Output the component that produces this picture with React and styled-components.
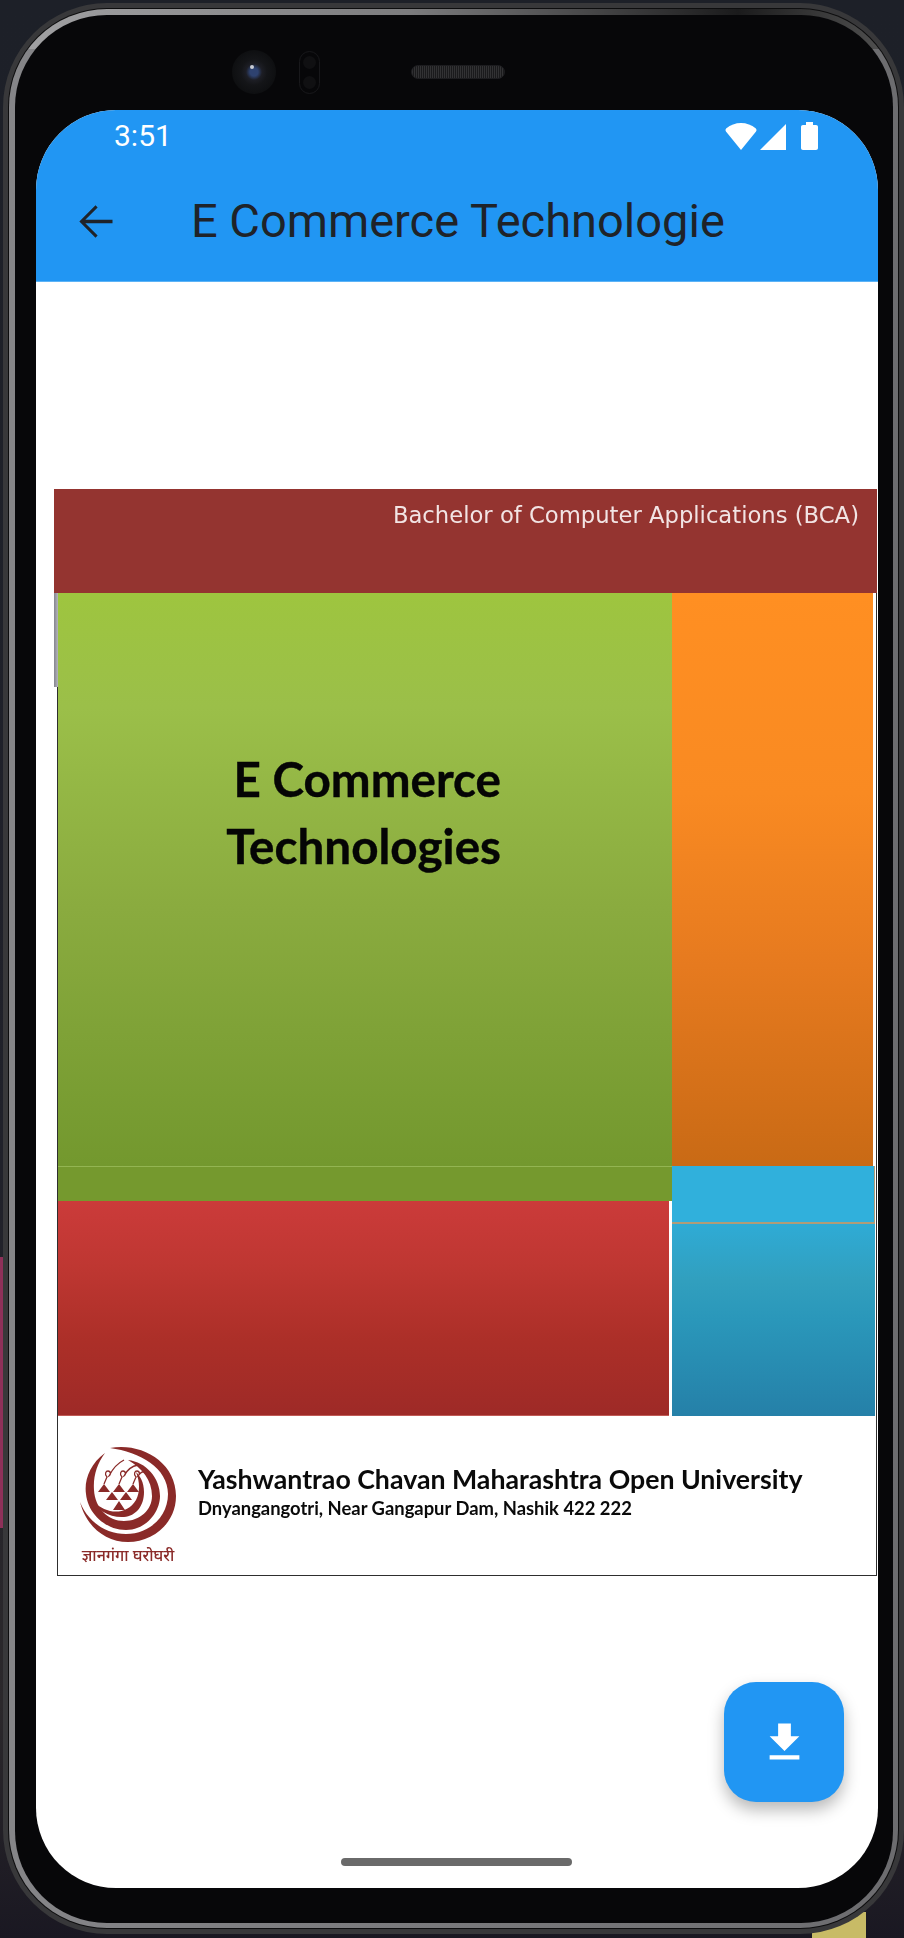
import React from "react";
import styled, { createGlobalStyle } from "styled-components";

const Global = createGlobalStyle`
  html, body { margin: 0; padding: 0; background: #1b1d24; }
  * { box-sizing: border-box; }
`;

const Page = styled.div`
  position: relative;
  width: 904px;
  height: 1938px;
  padding: 3px 0 4px 3px;
  overflow: hidden;
  background: linear-gradient(180deg, #1d2028 0%, #20212a 60%, #2b282b 88%, #1a1822 100%);
`;

const SideGlow = styled.div`
  position: absolute;
  left: 0;
  top: 1257px;
  width: 3px;
  height: 271px;
  background: #8e3059;
`;

const CornerGlow = styled.div`
  position: absolute;
  left: 812px;
  top: 1912px;
  width: 54px;
  height: 26px;
  background: #c8bb66;
`;

const OuterRing = styled.div`
  position: relative;
  height: 100%;
  padding: 5px;
  border-radius: 104px;
  background: #38383a;
`;

const InnerLine = styled.div`
  height: 100%;
  padding: 1px;
  border-radius: 99px;
  background: #0d0d0e;
`;

const LightRing = styled.div`
  height: 100%;
  padding: 6px 5px 5px 6px;
  border-radius: 98px;
  background:
    linear-gradient(90deg, #a2a2a4 0%, #7c7c7e 45%, #1b1b1c 82%, #555 100%) top / 100% 40px no-repeat,
    linear-gradient(90deg, #858588 0%, #6c6c6f 100%);
`;

const Bezel = styled.div`
  display: flex;
  flex-direction: column;
  height: 100%;
  padding: 0 15px 35px 21px;
  border-radius: 92px;
  background: #070709;
`;

const SensorRow = styled.div`
  flex: none;
  display: flex;
  align-items: center;
  height: 95px;
  padding: 19px 0 0 196px;
`;

const Camera = styled.div`
  position: relative;
  width: 44px;
  height: 44px;
  border-radius: 50%;
  background: radial-gradient(circle at 50% 50%, #2e4270 0 4px, #1d1e25 8px, #141518 13px, #0e0f11 22px);
`;

const Glint = styled.span`
  position: absolute;
  left: 18px;
  top: 15px;
  width: 4px;
  height: 4px;
  border-radius: 50%;
  background: #c8ccd4;
`;

const SensorPill = styled.div`
  display: flex;
  flex-direction: column;
  align-items: center;
  justify-content: space-between;
  width: 21px;
  height: 43px;
  margin-left: 23px;
  padding: 4px 0;
  border: 1px solid #18181b;
  border-radius: 11px;
`;

const SensorDot = styled.span`
  width: 13px;
  height: 13px;
  border-radius: 50%;
  background: #101012;
`;

const Speaker = styled.div`
  width: 94px;
  height: 14px;
  margin-left: 91px;
  border: 1px solid #1c1c1f;
  border-radius: 7px;
  background:
    repeating-linear-gradient(90deg, #323234 0 1px, #1a1a1c 1px 2px),
    #2a2a2c;
`;

const Screen = styled.div`
  position: relative;
  flex: 1;
  display: flex;
  flex-direction: column;
  min-height: 0;
  overflow: hidden;
  border-radius: 80px;
  background: #fff;
`;

const AppBar = styled.header`
  flex: none;
  height: 172px;
  background: #2196f3;
  border-bottom: 1px solid #5cb3f6;
`;

const StatusRow = styled.div`
  display: flex;
  align-items: center;
  justify-content: space-between;
  height: 52px;
  padding: 0 60px 0 78px;
`;

const Clock = styled.span`
  font: 400 30px/1 Roboto, sans-serif;
  color: #fff;
`;

const StatusIcons = styled.div`
  display: flex;
  align-items: center;
`;

const Wifi = styled.svg`
  width: 32px;
  height: 27px;
  fill: #fff;
`;

const Signal = styled.svg`
  width: 26px;
  height: 27px;
  margin-left: 3px;
  fill: #fff;
`;

const Battery = styled.svg`
  width: 17px;
  height: 28px;
  margin-left: 15px;
  fill: #fff;
`;

const Toolbar = styled.div`
  display: flex;
  align-items: center;
  height: 118px;
  padding-left: 34px;
`;

const BackIcon = styled.svg`
  flex: none;
  width: 51px;
  height: 51px;
  fill: #1f2329;
`;

const Title = styled.h1`
  margin: 0 0 0 70px;
  font: 400 47px/1.2 Roboto, sans-serif;
  color: #1f2329;
  white-space: nowrap;
`;

const Body = styled.main`
  flex: 1;
  display: flex;
  flex-direction: column;
  min-height: 0;
  padding: 207px 2px 22px 18px;
`;

const Cover = styled.section`
  position: relative;
  flex: none;
  width: 823px;
  filter: blur(0.35px);

  &::before {
    content: "";
    position: absolute;
    left: 0;
    top: 0;
    width: 3.5px;
    height: 198px;
    background: linear-gradient(90deg, #85858e, #b4b4bc);
  }
`;

const Banner = styled.div`
  height: 104px;
  padding: 14px 18px 0 0;
  background: #943430;
  text-align: right;
  font: 400 22.7px/24px "DejaVu Sans", sans-serif;
  color: #f2e4e4;
  filter: blur(0.6px);
  white-space: nowrap;
`;

const CoverSheet = styled.div`
  margin-left: 3px;
  border-left: 1.5px solid #2e2e2e;
  border-right: 1.5px solid #2e2e2e;
  border-bottom: 1.5px solid #2e2e2e;
  background: #fff;
`;

const Tiles = styled.div`
  display: grid;
  grid-template-columns: 614px 203px;
`;

const LeftTiles = styled.div`
  display: flex;
  flex-direction: column;
`;

const RightTiles = styled.div`
  display: flex;
  flex-direction: column;
`;

const GreenTile = styled.div`
  height: 573px;
  padding: 152px 0 0 165px;
  background: linear-gradient(180deg, #9ec53f 0%, #9bbf49 20%, #8aab3f 55%, #73982e 100%);
`;

const CoverTitle = styled.h2`
  width: 278px;
  margin: 0;
  text-align: right;
  font: 700 47.6px/67px Lato, sans-serif;
  color: #050505;
  -webkit-text-stroke: 0.4px #050505;
  white-space: nowrap;
`;

const GreenStrip = styled.div`
  height: 35px;
  border-top: 1px solid #93b552;
  background: #75992e;
`;

const RedTile = styled.div`
  flex: 1;
  height: 215px;
  margin-right: 3px;
  background: linear-gradient(180deg, #cb3b3a 0%, #bf3732 30%, #ac2f28 65%, #9e2a27 100%);
  border-bottom: 1px solid #c05a55;
`;

const OrangeTile = styled.div`
  height: 573px;
  margin-right: 2px;
  background: linear-gradient(180deg, #ff8f22 0%, #f98a22 35%, #e67a1f 65%, #c96a15 100%);
`;

const BlueHead = styled.div`
  height: 58px;
  border-right: 1.5px solid #b09c78;
  border-bottom: 2px solid #b09c78;
  background: #30b0dc;
`;

const BlueTile = styled.div`
  height: 192px;
  background: linear-gradient(180deg, #2fabd5 0%, #319fbe 30%, #2a97ba 50%, #2580a8 100%);
`;

const CoverFooter = styled.div`
  display: flex;
  height: 159px;
  padding: 30px 0 0 21px;
`;

const LogoBlock = styled.div`
  flex: none;
  display: flex;
  flex-direction: column;
  align-items: center;
  width: 98px;
`;

const Logo = styled.svg`
  width: 96px;
  height: 96px;
  fill: #8a2a28;
`;

const Motto = styled.span`
  margin-top: 3px;
  font: 500 16px/20px "Noto Sans", "Noto Sans Devanagari", "DejaVu Sans", sans-serif;
  color: #8a2a28;
  white-space: nowrap;
`;

const University = styled.div`
  margin-left: 21px;
  padding-top: 19px;
`;

const UniversityName = styled.div`
  font: 700 26.7px/29px Lato, sans-serif;
  color: #0a0a0a;
  white-space: nowrap;
`;

const UniversityAddress = styled.div`
  font: 700 18.4px/28px Lato, sans-serif;
  color: #0a0a0a;
  white-space: nowrap;
`;

const HomeBar = styled.div`
  flex: none;
  align-self: center;
  width: 231px;
  height: 8px;
  margin: auto 0 0 -18px;
  border-radius: 4px;
  background: #6a6a6a;
`;

const Fab = styled.button`
  position: absolute;
  right: 34px;
  bottom: 86px;
  display: flex;
  align-items: center;
  justify-content: center;
  width: 120px;
  height: 120px;
  padding: 0;
  border: 0;
  border-radius: 32px;
  background: #2196f3;
  box-shadow: 0 8px 16px rgba(0, 0, 0, 0.28);
`;

const FabIcon = styled.svg`
  width: 51px;
  height: 51px;
  fill: #fff;
`;

const LogoMark = () => (
  <Logo viewBox="0 0 96 96">
    <path d="M30 2C60-4 96 15 96 50C96 78 72 96 48 96C25 96 6 80 0 56C8 76 26 88 46 88C70 88 88 70 88 48C88 22 60 6 30 2Z" />
    <path d="M25 7C10 18 4 34 6 48C8 68 26 84 46 84C66 84 80 66 80 50C80 32 66 16 48 14C62 22 72 34 72 50C72 64 60 75 44 75C28 75 15 62 14 44C13 30 17 18 25 7Z" />
    <path d="M10 52C16 64 30 72 44 71C56 70 64 60 64 46C64 36 60 30 56 26C60 36 60 46 56 54C50 64 40 67 30 65C22 63 15 58 10 52Z" />
    <path d="M18 46L24 38L30 46ZM33 46L39 38L45 46ZM47 46L53 38L59 46ZM26 54L32 46L38 54ZM40 54L46 46L52 54ZM33 64L39 55L45 64Z" />
    <g fill="none" stroke="#8a2a28" strokeWidth="1.3">
      <path d="M24 38L27 31C24 28 26 25 28 25C31 25 31 29 29 30C32 24 36 18 44 14" />
      <path d="M39 38L42 31C39 28 41 25 43 25C46 25 46 29 44 30C47 24 52 20 58 19" />
      <path d="M53 38L56 31C53 28 55 25 57 25C60 25 60 29 58 30C60 27 62 25 65 26" />
    </g>
  </Logo>
);

export default function App() {
  return (
    <Page>
      <Global />
      <SideGlow />
      <CornerGlow />
      <OuterRing>
        <InnerLine>
          <LightRing>
            <Bezel>
              <SensorRow>
                <Camera>
                  <Glint />
                </Camera>
                <SensorPill>
                  <SensorDot />
                  <SensorDot />
                </SensorPill>
                <Speaker />
              </SensorRow>
              <Screen>
                <AppBar>
                  <StatusRow>
                    <Clock>3:51</Clock>
                    <StatusIcons>
                      <Wifi viewBox="0 0 32 27">
                        <path d="M16 27L1 8.5C.2 7.4.4 6 1.4 5.2C5.4 2 10.4 0 16 0s10.6 2 14.6 5.2C31.6 6 31.800 7.400 31 8.500Z" />
                      </Wifi>
                      <Signal viewBox="0 0 26 27">
                        <path d="M26 1V27H0Z" />
                      </Signal>
                      <Battery viewBox="0 0 17 28">
                        <path d="M5 0H12V3H15C16.200 3 17 3.800 17 5V26C17 27.200 16.200 28 15 28H2C.8 28 0 27.200 0 26V5C0 3.800.8 3 2 3H5Z" />
                      </Battery>
                    </StatusIcons>
                  </StatusRow>
                  <Toolbar>
                    <BackIcon viewBox="0 0 24 24">
                      <path d="M20 11.200H7.200l5.800-5.800L12 4.400l-7.600 7.600 7.600 7.600 1-1-5.800-5.800H20z" />
                    </BackIcon>
                    <Title>E Commerce Technologie</Title>
                  </Toolbar>
                </AppBar>
                <Body>
                  <Cover>
                    <Banner>Bachelor of Computer Applications (BCA)</Banner>
                    <CoverSheet>
                      <Tiles>
                        <LeftTiles>
                          <GreenTile>
                            <CoverTitle>
                              E Commerce
                              <br />
                              Technologies
                            </CoverTitle>
                          </GreenTile>
                          <GreenStrip />
                          <RedTile />
                        </LeftTiles>
                        <RightTiles>
                          <OrangeTile />
                          <BlueHead />
                          <BlueTile />
                        </RightTiles>
                      </Tiles>
                      <CoverFooter>
                        <LogoBlock>
                          <LogoMark />
                          <Motto>ज्ञानगंगा घरोघरी</Motto>
                        </LogoBlock>
                        <University>
                          <UniversityName>Yashwantrao Chavan Maharashtra Open University</UniversityName>
                          <UniversityAddress>Dnyangangotri, Near Gangapur Dam, Nashik 422 222</UniversityAddress>
                        </University>
                      </CoverFooter>
                    </CoverSheet>
                  </Cover>
                  <HomeBar />
                </Body>
                <Fab aria-label="Download">
                  <FabIcon viewBox="0 0 24 24">
                    <path d="M19 9h-4V3H9v6H5l7 7 7-7zM5 18v2h14v-2H5z" />
                  </FabIcon>
                </Fab>
              </Screen>
            </Bezel>
          </LightRing>
        </InnerLine>
      </OuterRing>
    </Page>
  );
}
